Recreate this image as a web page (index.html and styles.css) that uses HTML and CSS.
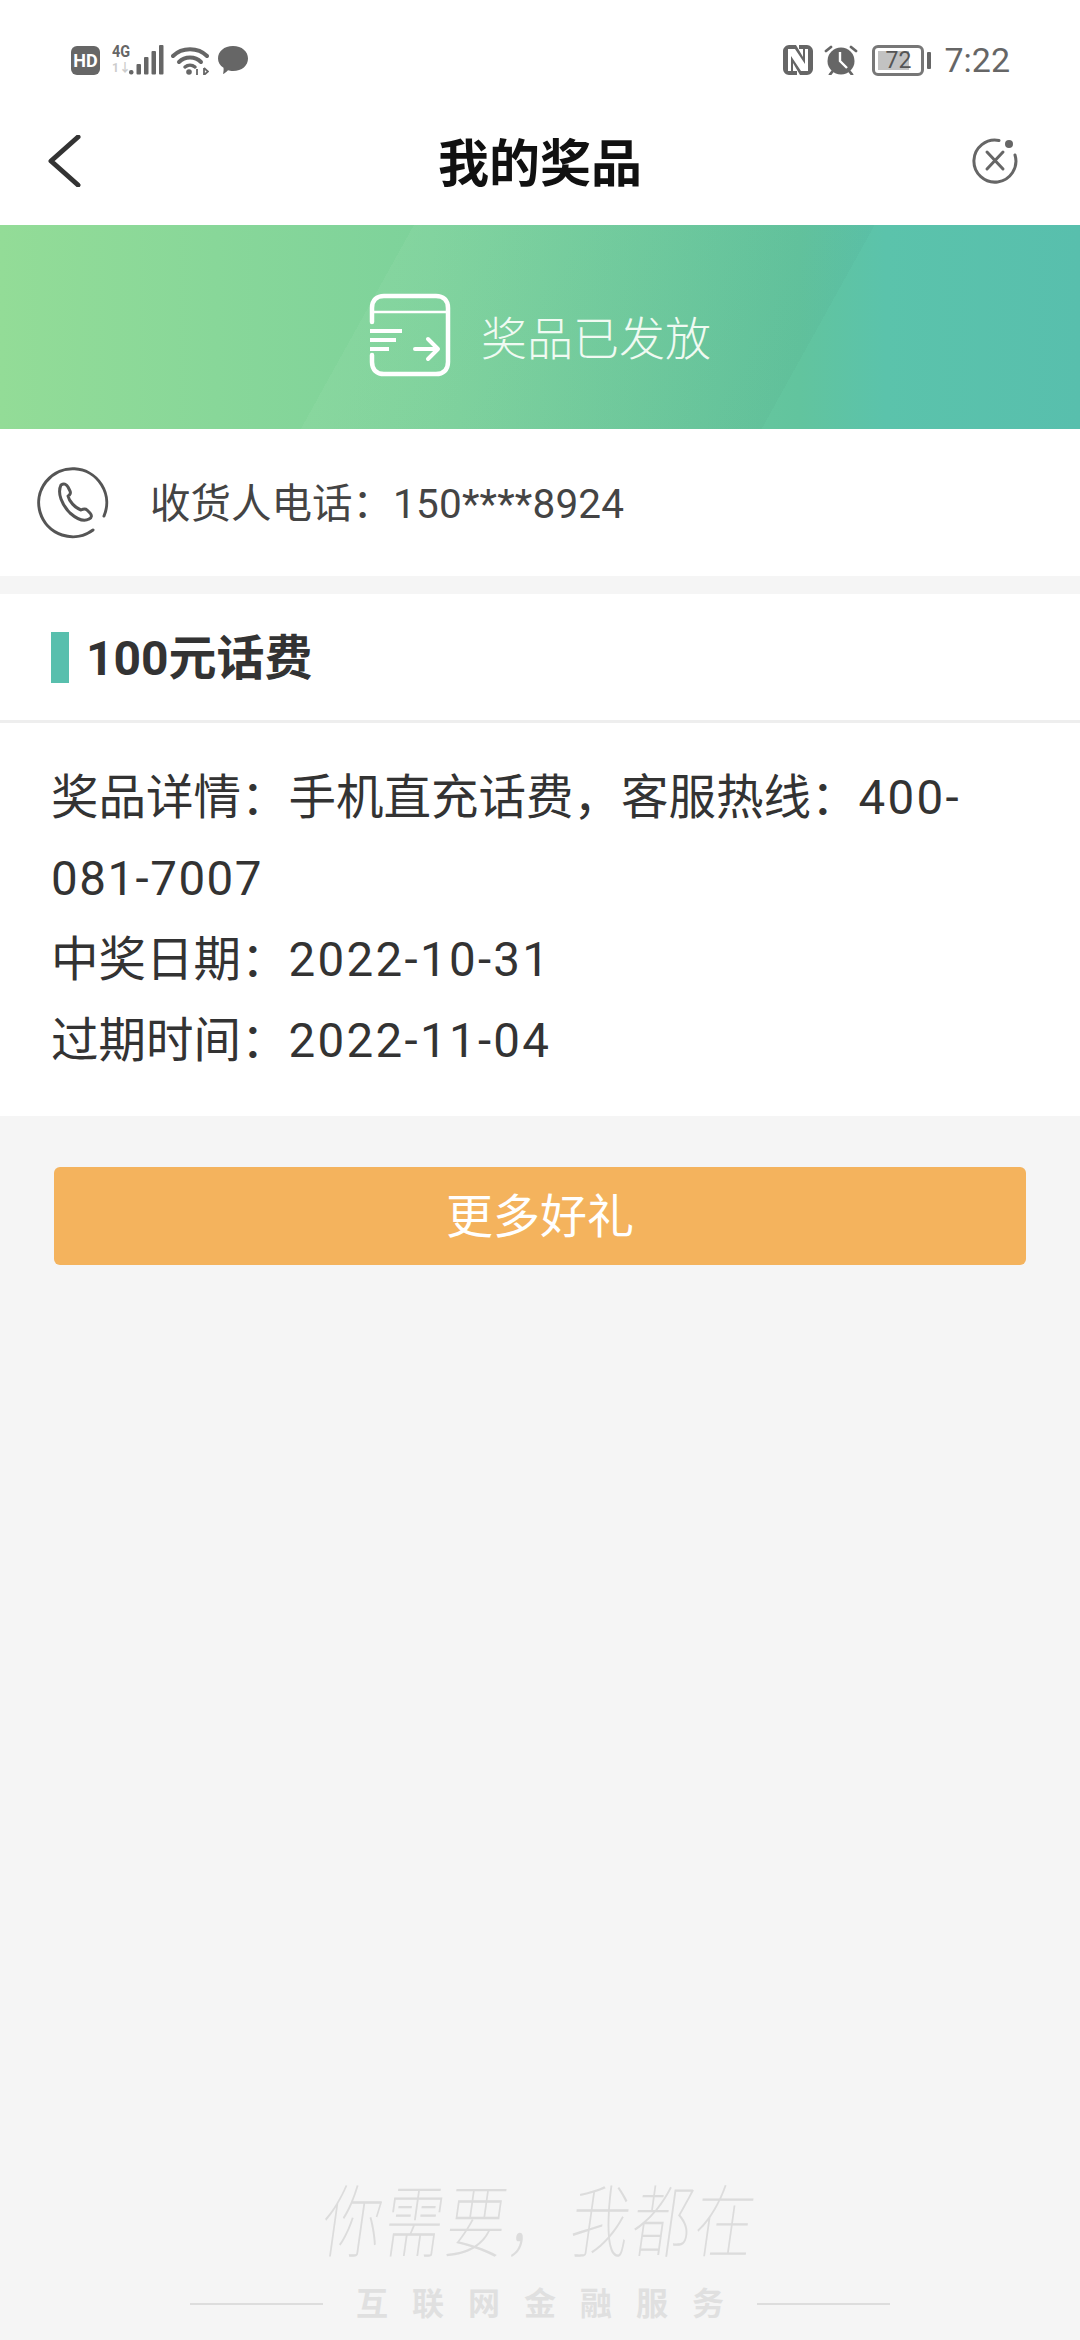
FILE: index.html
```html
<!DOCTYPE html>
<html lang="zh-CN">
<head>
    <meta charset="UTF-8">
    <meta name="viewport" content="width=device-width, initial-scale=1.0">
    <title>我的奖品</title>
    <link rel="stylesheet" href="styles.css">
</head>
<body>
    <div class="page">
        <!-- status bar -->
        <div class="status-bar">
            <div class="status-left">
                <div class="ic-hd">HD</div>
                <div class="net">
                    <span class="net-top">4G</span>
                    <span class="net-bottom">1↓</span>
                </div>
                <svg class="ic-signal" width="36" height="30" viewBox="0 0 36 30">
                    <rect x="1" y="25" width="4.500" height="4.500" rx="2" fill="#666"/>
                    <rect x="8.500" y="19" width="4.500" height="10.500" rx="1" fill="#666"/>
                    <rect x="16" y="12" width="4.500" height="17.500" rx="1" fill="#666"/>
                    <rect x="23.500" y="6" width="4.500" height="23.500" rx="1" fill="#666"/>
                    <rect x="31" y="0" width="4.500" height="29.500" rx="1" fill="#666"/>
                </svg>
                <svg class="ic-wifi" width="38" height="30" viewBox="0 0 38 30">
                    <path d="M2 11 C11 2 27 2 36 11" fill="none" stroke="#666" stroke-width="4" stroke-linecap="round"/>
                    <path d="M8 17 C14 11 24 11 30 17" fill="none" stroke="#666" stroke-width="4" stroke-linecap="round"/>
                    <path d="M14 22 C17 19.500 21 19.500 24 22" fill="none" stroke="#666" stroke-width="3.500" stroke-linecap="round"/>
                    <circle cx="18" cy="27" r="2.800" fill="#666"/>
                    <path d="M26 24 L26 30 M33 23 L33 30 M33 23 L37 26.500 L33 30" fill="none" stroke="#666" stroke-width="1.800"/>
                </svg>
                <svg class="ic-msg" width="32" height="30" viewBox="0 0 32 30">
                    <path d="M16 1 C25 1 31 6.500 31 13.500 C31 20.500 25 26 16 26 C14 26 12.500 25.800 11 25.300 C9.500 27 7.500 28.500 6 29 C6.500 27 6.800 24.500 6.500 22.800 C3 20.500 1 17.300 1 13.500 C1 6.500 7 1 16 1 Z" fill="#666"/>
                </svg>
            </div>
            <div class="status-right">
                <svg class="ic-nfc" width="30" height="30" viewBox="0 0 30 30">
                    <path d="M6 0 H13 L20 12 V4 H16 V0 H24 C27 0 30 3 30 6 V24 C30 27 27 30 24 30 H17 L10 18 V26 H14 V30 H6 C3 30 0 27 0 24 V6 C0 3 3 0 6 0 Z M5 4 V26 H8 V11 L18 26 H25 V4 H22 V19 L12 4 Z" fill="#666" fill-rule="evenodd"/>
                </svg>
                <svg class="ic-alarm" width="34" height="30" viewBox="0 0 34 30">
                    <circle cx="17" cy="16" r="13.500" fill="#666"/>
                    <path d="M16 7 V16 L23 23" fill="none" stroke="#fff" stroke-width="2.400"/>
                    <path d="M2 6 L7 2 M32 6 L27 2 M8 27 L6 29.500 M26 27 L28 29.500" fill="none" stroke="#666" stroke-width="2.800" stroke-linecap="round"/>
                </svg>
                <div class="battery">
                    <div class="battery-box">
                        <div class="battery-fill"></div>
                        <span class="battery-num">72</span>
                    </div>
                    <div class="battery-nub"></div>
                </div>
                <span class="clock">7:22</span>
            </div>
        </div>

        <!-- nav -->
        <div class="nav">
            <svg class="nav-back" width="34" height="52" viewBox="0 0 34 52">
                <path d="M31 2 L4 26 L31 50" fill="none" stroke="#333" stroke-width="5" stroke-linecap="round" stroke-linejoin="round"/>
            </svg>
            <h1 class="nav-title">我的奖品</h1>
            <svg class="nav-close" width="48" height="48" viewBox="0 0 48 48">
                <path d="M28 3.500 A21 21 0 1 0 44 18" fill="none" stroke="#666" stroke-width="3" stroke-linecap="round"/>
                <circle cx="38" cy="7" r="4" fill="#666"/>
                <path d="M16 15 L32 32 M32 15 L16 32" fill="none" stroke="#666" stroke-width="3" stroke-linecap="round"/>
            </svg>
        </div>

        <!-- banner -->
        <div class="banner">
            <svg class="banner-icon" width="82" height="84" viewBox="0 0 82 84">
                <path d="M3 29 V15 C3 7 8 3 15 3 H67 C74 3 79 7 79 15 V69 C79 77 74 81 67 81 H15 C8 81 3 77 3 69 V62" fill="none" stroke="#fff" stroke-width="4.500" stroke-linecap="round"/>
                <path d="M4 19 H78" fill="none" stroke="#fff" stroke-width="2.500"/>
                <path d="M1 38 H33 M1 47 H27 M1 56 H20" fill="none" stroke="#fff" stroke-width="4"/>
                <path d="M46 56 H68 M59 46 L69 56 L59 66" fill="none" stroke="#fff" stroke-width="4" stroke-linecap="round" stroke-linejoin="round"/>
            </svg>
            <span class="banner-text">奖品已发放</span>
        </div>

        <!-- phone -->
        <div class="phone-row">
            <svg class="phone-icon" width="74" height="74" viewBox="0 0 74 74">
                <path d="M56 64 A34 34 0 1 1 67 50" fill="none" stroke="#555" stroke-width="3" stroke-linecap="round"/>
                <path d="M24 19 C27 17 29 18 31 21 L33 25 C34 27 33 29 31 30 C32 35 38 42 44 44 C46 43 48 42 50 44 L53 47 C55 49 55 52 52 53 C47 56 41 54 33 47 C25 39 20 27 24 19 Z" fill="none" stroke="#555" stroke-width="3" stroke-linejoin="round"/>
            </svg>
            <span class="phone-text">收货人电话：<span class="phone-num">150****8924</span></span>
        </div>

        <!-- prize card -->
        <div class="prize">
            <div class="prize-head">
                <i class="prize-mark"></i>
                <h2 class="prize-name">100元话费</h2>
            </div>
            <div class="prize-body">
                <p>奖品详情：手机直充话费，客服热线：<span class="num">400-</span><br><span class="num-tight">081-7007</span></p>
                <p>中奖日期：<span class="num">2022-10-31</span></p>
                <p>过期时间：<span class="num">2022-11-04</span></p>
            </div>
        </div>

        <button class="more-btn">更多好礼</button>

        <!-- slogan -->
        <div class="slogan">
            <div class="slogan-hand">你需要，我都在</div>
            <div class="slogan-sub">
                <i class="slogan-line"></i>
                <span>互联网金融服务</span>
                <i class="slogan-line"></i>
            </div>
        </div>
    </div>
</body>
</html>
```

FILE: styles.css
```css
* {
    box-sizing: border-box;
}
html, body {
    margin: 0;
    padding: 0;
}
body {
    width: 1080px;
    height: 2340px;
    overflow: hidden;
    background-color: #f5f5f5;
    color: #333;
    font-family: "Roboto", "Noto Sans CJK SC", sans-serif;
}
.page {
    display: flex;
    flex-direction: column;
    height: 2340px;
}

/* status bar */
.status-bar {
    display: flex;
    justify-content: space-between;
    align-items: center;
    height: 105px;
    padding: 45px 70px 30px 71px;
    background-color: #fff;
}
.status-left, .status-right {
    display: flex;
    align-items: center;
}
.status-bar svg {
    display: block;
}
.ic-hd {
    width: 29px;
    height: 29px;
    border-radius: 6px;
    background-color: #666;
    color: #fff;
    font-size: 18px;
    font-weight: 700;
    line-height: 29px;
    text-align: center;
}
.net {
    display: flex;
    flex-direction: column;
    width: 18px;
    margin: -4px 0 0 12px;
    font-weight: 700;
}
.net span {
    display: block;
    white-space: nowrap;
    transform-origin: left center;
}
.net-top {
    height: 20px;
    font-size: 17px;
    line-height: 20px;
    color: #666;
    transform: scaleX(0.85);
}
.net-bottom {
    height: 14px;
    font-size: 12px;
    line-height: 14px;
    color: #ccc;
}
.ic-signal {
    margin-left: -2px;
}
.ic-wifi {
    margin-left: 7px;
}
.ic-msg {
    margin-left: 8px;
}
.ic-alarm {
    margin-left: 11px;
}
.battery {
    display: flex;
    align-items: center;
    margin-left: 14px;
}
.battery-box {
    position: relative;
    width: 52px;
    height: 31px;
    border: 3px solid #777;
    border-radius: 6px;
}
.battery-fill {
    width: 31px;
    height: 19px;
    margin: 3px 0 0 3px;
    background-color: #c2c2c2;
}
.battery-num {
    position: absolute;
    top: 0;
    left: 0;
    width: 46px;
    text-align: center;
    font-size: 23px;
    line-height: 25px;
    color: #555;
}
.battery-nub {
    width: 4px;
    height: 17px;
    margin-left: 3px;
    background-color: #666;
    border-radius: 1px;
}
.clock {
    margin-left: 13px;
    font-size: 34px;
    line-height: 30px;
    color: #666;
}

/* nav */
.nav {
    position: relative;
    display: flex;
    justify-content: center;
    align-items: center;
    height: 120px;
    background-color: #fff;
}
.nav-title {
    margin: 0;
    font-size: 51px;
    font-weight: 700;
    line-height: 114px;
    color: #111;
}
.nav-back {
    position: absolute;
    left: 47px;
    top: 30px;
}
.nav-close {
    position: absolute;
    left: 971px;
    top: 32px;
}

/* banner */
.banner {
    display: flex;
    justify-content: center;
    align-items: center;
    height: 204px;
    padding-top: 16px;
    background:
        linear-gradient(119deg, transparent 362px, rgba(255, 255, 255, 0.045) 362px, rgba(0, 0, 0, 0.02) 765px, transparent 765px),
        linear-gradient(90deg, #93dc97 0%, #7dd29b 40%, #62c49e 74%, #5bc3ab 82%, #58bfad 100%);
}
.banner-icon {
    margin-right: 30px;
}
.banner-text {
    font-size: 46px;
    color: #f0faf2;
    font-weight: 300;
}

/* phone */
.phone-row {
    display: flex;
    align-items: center;
    height: 147px;
    padding-left: 37px;
    background-color: #fff;
}
.phone-text {
    margin: 0 0 5px 39px;
    font-size: 40.500px;
    color: #444;
}
.phone-num {
    letter-spacing: 0.200px;
}

/* prize card */
.prize {
    margin-top: 18px;
    background-color: #fff;
}
.prize-head {
    display: flex;
    align-items: center;
    height: 129px;
    padding-left: 51px;
    border-bottom: 3px solid #eee;
}
.prize-mark {
    width: 18px;
    height: 51px;
    background-color: #58bfad;
}
.prize-name {
    margin: 0 0 6px 17px;
    font-size: 48px;
    font-weight: 700;
    color: #333;
}
.prize-body {
    padding: 35px 51px 34px 51px;
    font-size: 47.500px;
    line-height: 81px;
    color: #333;
}
.prize-body p {
    margin: 0;
}
.num {
    letter-spacing: 2.300px;
}
.num-tight {
    letter-spacing: 1.500px;
}

/* button */
.more-btn {
    display: block;
    width: 972px;
    height: 98px;
    margin: 51px 54px 0 54px;
    padding: 0 0 7px 0;
    border: none;
    border-radius: 6px;
    background-color: #f4b35d;
    color: #fff;
    font-family: inherit;
    font-size: 47px;
}

/* slogan */
.slogan {
    margin-top: auto;
    padding-bottom: 14px;
}
.slogan-hand {
    text-align: center;
    font-size: 59px;
    font-weight: 100;
    letter-spacing: 3px;
    line-height: 100px;
    color: #dcdcdc;
    transform: skewX(-8deg) scaleY(1.35);
}
.slogan-sub {
    display: flex;
    justify-content: center;
    align-items: center;
    margin-top: 8px;
    font-size: 32px;
    font-weight: 700;
    line-height: 44px;
    letter-spacing: 24px;
    color: #e0e0e0;
}
.slogan-sub span {
    margin-right: -24px;
    padding: 0 33px;
}
.slogan-line {
    width: 133px;
    height: 2px;
    background-color: #ddd;
}
```
